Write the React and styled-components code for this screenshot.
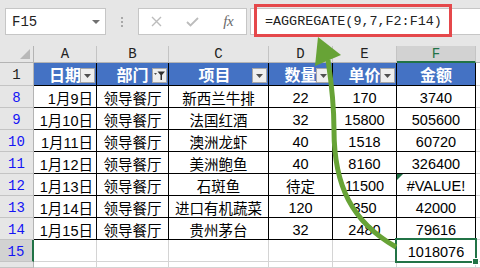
import React from "react";
import styled, { createGlobalStyle, css } from "styled-components";

const GlobalStyle = createGlobalStyle`
  html, body { margin: 0; padding: 0; }
  body { background: #e6e6e6; overflow: hidden; }
`;

const Page = styled.div`
  position: relative;
  width: 480px;
  height: 268px;
  overflow: hidden;
  background: #e6e6e6;
  font-family: "Liberation Sans", "Noto Sans CJK SC", sans-serif;
`;

const Toolbar = styled.div`
  height: 46px;
  box-sizing: border-box;
  display: flex;
  align-items: flex-start;
  padding: 8px 0 0 5px;
`;

const NameBox = styled.div`
  box-sizing: border-box;
  width: 101px;
  height: 27px;
  background: #fff;
  border: 1px solid #c6c6c6;
  display: flex;
  align-items: center;
  justify-content: space-between;
  padding: 0 5px 0 6px;
  font-family: "Liberation Mono", monospace;
  font-size: 14px;
  color: #222;
`;

const Caret = styled.span`
  width: 0;
  height: 0;
  border-left: 4px solid transparent;
  border-right: 4px solid transparent;
  border-top: 4px solid #707070;
`;

const Grip = styled.div`
  width: 32px;
  height: 27px;
  display: flex;
  flex-direction: column;
  align-items: center;
  justify-content: center;
  gap: 2px;
`;

const GripDot = styled.span`
  width: 2px;
  height: 2px;
  background: #a8a8a8;
`;

const ButtonsBox = styled.div`
  box-sizing: border-box;
  width: 109px;
  height: 27px;
  background: #fff;
  border: 1px solid #c6c6c6;
  display: flex;
`;

const ToolButton = styled.div`
  flex: 1;
  display: flex;
  align-items: center;
  justify-content: center;
`;

const Fx = styled.span`
  font-family: "Liberation Serif", serif;
  font-style: italic;
  font-size: 15px;
  color: #6a6a6a;
  letter-spacing: -0.5px;
`;

const FormulaBox = styled.div`
  position: relative;
  box-sizing: border-box;
  flex: 1;
  margin-left: 3px;
  height: 27px;
  background: #fff;
  border: 1px solid #c6c6c6;
  border-right: none;
  display: flex;
  align-items: center;
  padding-left: 14px;
  font-family: "Liberation Mono", monospace;
  font-size: 13.4px;
  color: #222;
`;

const Highlight = styled.div`
  position: absolute;
  left: 3px;
  top: -5px;
  width: 198px;
  height: 33px;
  box-sizing: border-box;
  border: 3px solid #e5484b;
`;

const Sheet = styled.div`
  display: grid;
  grid-template-columns: 34px 63px 72px 100px 64px 64px 79px 1fr;
  grid-template-rows: 17px 23px repeat(8, 22px) 1fr;
  height: 222px;
  background: #fff;
`;

const headFont = css`
  font-family: "Liberation Mono", monospace;
  font-size: 14px;
`;

const ColHead = styled.div`
  box-sizing: border-box;
  background: ${(p) => (p.$selected ? "#d2d2d2" : "#e6e6e6")};
  border-right: 1px solid #c4c4c4;
  border-bottom: ${(p) => (p.$selected ? "2px solid #217346" : "1px solid #b4b4b4")};
  color: ${(p) => (p.$selected ? "#217346" : "#222")};
  display: flex;
  align-items: center;
  justify-content: center;
  ${headFont}
`;

const Corner = styled.div`
  box-sizing: border-box;
  background: #e6e6e6;
  border-right: 1px solid #b4b4b4;
  border-bottom: 1px solid #b4b4b4;
  display: flex;
  align-items: flex-end;
  justify-content: flex-end;
  padding: 0 3px 3px 0;
`;

const CornerTri = styled.span`
  width: 0;
  height: 0;
  border-left: 10px solid transparent;
  border-bottom: 10px solid #b8b8b8;
`;

const RowHead = styled.div`
  box-sizing: border-box;
  background: ${(p) => (p.$selected ? "#d2d2d2" : "#e6e6e6")};
  border-right: ${(p) => (p.$selected ? "2px solid #217346" : "1px solid #b4b4b4")};
  border-bottom: 1px solid #c4c4c4;
  color: ${(p) => (p.$blue ? "#1414f5" : "#222")};
  display: flex;
  align-items: center;
  justify-content: center;
  padding-top: 2px;
  ${headFont}
`;

const HeadCell = styled.div`
  position: relative;
  box-sizing: border-box;
  background: #4472c4;
  color: #fff;
  font-weight: bold;
  font-size: 16px;
  border-right: 1px solid #000;
  border-bottom: 1px solid #000;
  display: flex;
  align-items: center;
  justify-content: center;
  padding-right: ${(p) => p.$shift || 0}px;
`;

const FilterBtn = styled.span`
  position: absolute;
  right: 1px;
  top: 5px;
  width: 15px;
  height: 15px;
  box-sizing: border-box;
  background: #efefef;
  border: 1px solid #a8a8a8;
  display: flex;
  align-items: center;
  justify-content: center;
`;

const Cell = styled.div`
  position: relative;
  box-sizing: border-box;
  background: #fff;
  border-right: 1px solid ${(p) => (p.$table ? "#000" : "#d4d4d4")};
  border-bottom: 1px solid ${(p) => (p.$table ? "#000" : "#d4d4d4")};
  display: flex;
  align-items: center;
  justify-content: ${(p) => (p.$align === "right" ? "flex-end" : "center")};
  padding: 2px 3px 0;
  font-size: 14.5px;
  color: #000;
  white-space: nowrap;
  ${(p) =>
    p.$error &&
    css`
      &::before {
        content: "";
        position: absolute;
        left: 0;
        top: 0;
        border-top: 6px solid #1e7145;
        border-right: 6px solid transparent;
      }
    `}
  ${(p) =>
    p.$active &&
    css`
      &::after {
        content: "";
        position: absolute;
        left: -2px;
        top: -2px;
        right: -2px;
        bottom: -2px;
        border: 2px solid #217346;
        z-index: 2;
      }
      &::before {
        content: "";
        position: absolute;
        right: -4px;
        bottom: -4px;
        width: 5px;
        height: 5px;
        background: #217346;
        border: 1px solid #fff;
        z-index: 3;
      }
    `}
`;

const ArrowLayer = styled.svg`
  position: absolute;
  left: 0;
  top: 0;
  pointer-events: none;
  z-index: 10;
`;

const DownTri = () => (
  <svg width="7" height="4" viewBox="0 0 7 4">
    <polygon points="0,0 7,0 3.5,4" fill="#505050" />
  </svg>
);

const Funnel = () => (
  <svg width="11" height="9" viewBox="0 0 11 9">
    <polygon points="0,2 3,2 1.5,4" fill="#505050" />
    <polygon points="3.5,0.5 11,0.5 8,4 8,9 6.5,9 6.5,4" fill="#303030" />
  </svg>
);

const headers = [
  { label: "日期", btn: "down" },
  { label: "部门", btn: "filter" },
  { label: "项目", btn: "down", shift: 8 },
  { label: "数量", btn: "down" },
  { label: "单价", btn: "down" },
  { label: "金额" },
];

const rows = [
  { n: 8, d: ["1月9日", "领导餐厅", "新西兰牛排", "22", "170", "3740"] },
  { n: 9, d: ["1月10日", "领导餐厅", "法国红酒", "32", "15800", "505600"] },
  { n: 10, d: ["1月11日", "领导餐厅", "澳洲龙虾", "40", "1518", "60720"] },
  { n: 11, d: ["1月12日", "领导餐厅", "美洲鲍鱼", "40", "8160", "326400"] },
  { n: 12, d: ["1月13日", "领导餐厅", "石斑鱼", "待定", "11500", "#VALUE!"], error: true },
  { n: 13, d: ["1月14日", "领导餐厅", "进口有机蔬菜", "120", "350", "42000"] },
  { n: 14, d: ["1月15日", "领导餐厅", "贵州茅台", "32", "2480", "79616"] },
];

const letters = ["A", "B", "C", "D", "E", "F"];

export default function App() {
  return (
    <Page>
      <GlobalStyle />
      <Toolbar>
        <NameBox>
          <span>F15</span>
          <Caret />
        </NameBox>
        <Grip>
          <GripDot />
          <GripDot />
          <GripDot />
        </Grip>
        <ButtonsBox>
          <ToolButton>
            <svg width="11" height="11" viewBox="0 0 11 11">
              <path d="M1 1 L10 10 M10 1 L1 10" stroke="#bcbcbc" strokeWidth="1.4" />
            </svg>
          </ToolButton>
          <ToolButton>
            <svg width="13" height="10" viewBox="0 0 13 10">
              <path d="M1 5 L4.5 8.5 L12 1" stroke="#bcbcbc" strokeWidth="1.8" fill="none" />
            </svg>
          </ToolButton>
          <ToolButton>
            <Fx>fx</Fx>
          </ToolButton>
        </ButtonsBox>
        <FormulaBox>
          =AGGREGATE(9,7,F2:F14)
          <Highlight />
        </FormulaBox>
      </Toolbar>

      <Sheet>
        <Corner>
          <CornerTri />
        </Corner>
        {letters.map((l) => (
          <ColHead key={l} $selected={l === "F"}>
            {l}
          </ColHead>
        ))}
        <ColHead />

        <RowHead>1</RowHead>
        {headers.map((h) => (
          <HeadCell key={h.label} $shift={h.shift}>
            {h.label}
            {h.btn && <FilterBtn>{h.btn === "filter" ? <Funnel /> : <DownTri />}</FilterBtn>}
          </HeadCell>
        ))}
        <Cell />

        {rows.map((r) => (
          <React.Fragment key={r.n}>
            <RowHead $blue>{r.n}</RowHead>
            {r.d.map((v, i) => (
              <Cell
                key={i}
                $table
                $align={i === 0 ? "right" : "center"}
                $error={r.error && i === 5}
              >
                {v}
              </Cell>
            ))}
            <Cell />
          </React.Fragment>
        ))}

        <RowHead $blue $selected>
          15
        </RowHead>
        <Cell />
        <Cell />
        <Cell />
        <Cell />
        <Cell />
        <Cell $active>1018076</Cell>
        <Cell />

        <RowHead $blue />
        <Cell />
        <Cell />
        <Cell />
        <Cell />
        <Cell />
        <Cell />
        <Cell />
      </Sheet>

      <ArrowLayer width="480" height="268" viewBox="0 0 480 268">
        <path
          d="M396 247 C352 222 334 186 334 130 C334 100 331 80 328 60"
          stroke="#67a336"
          strokeWidth="5"
          fill="none"
        />
        <polygon points="318,37 341,55 315,66" fill="#67a336" />
      </ArrowLayer>
    </Page>
  );
}
